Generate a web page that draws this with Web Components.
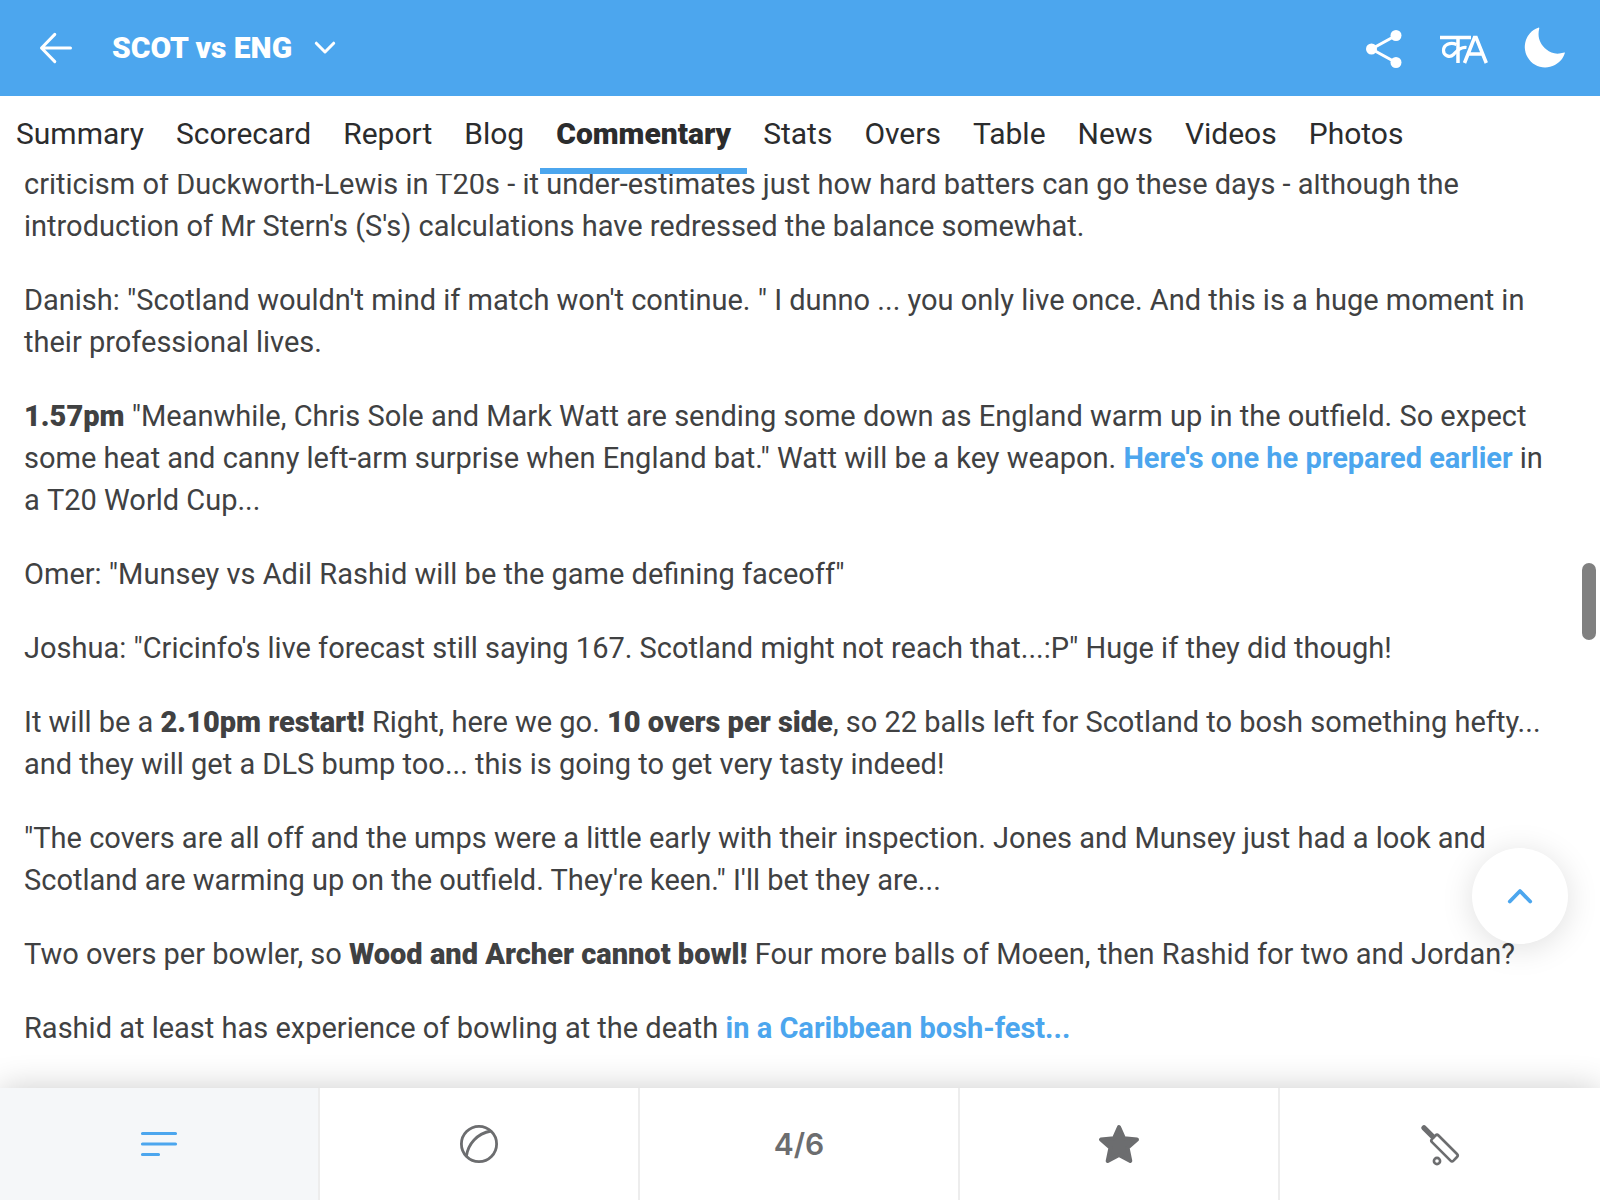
<!DOCTYPE html>
<html lang="en">
<head>
<meta charset="utf-8">
<meta name="viewport" content="width=device-width, initial-scale=1">
<title>SCOT vs ENG</title>
<style>
html, body { margin: 0; height: 100%; }
body { font-family: Roboto, "Liberation Sans", sans-serif; background: #fff; --accent: #4ca6ee; --ink: #2b2c2d; --text: #404142; --muted: #6c6d6f; }
commentary-note b { font-weight: 900; }
</style>
</head>
<body>
<match-app>
  <match-header slot="header">SCOT vs ENG</match-header>
  <match-tabs slot="tabs">
    <match-tab>Summary</match-tab>
    <match-tab>Scorecard</match-tab>
    <match-tab>Report</match-tab>
    <match-tab>Blog</match-tab>
    <match-tab active>Commentary</match-tab>
    <match-tab>Stats</match-tab>
    <match-tab>Overs</match-tab>
    <match-tab>Table</match-tab>
    <match-tab>News</match-tab>
    <match-tab>Videos</match-tab>
    <match-tab>Photos</match-tab>
  </match-tabs>
  <commentary-feed>
    <commentary-note>criticism of Duckworth-Lewis in T20s - it under-estimates just how hard batters can go these days - although the introduction of Mr Stern's (S's) calculations have redressed the balance somewhat.</commentary-note>
    <commentary-note>Danish: "Scotland wouldn't mind if match won't continue. " I dunno ... you only live once. And this is a huge moment in their professional lives.</commentary-note>
    <commentary-note><b>1.57pm</b> "Meanwhile, Chris Sole and Mark Watt are sending some down as England warm up in the outfield. So expect some heat and canny left-arm surprise when England bat." Watt will be a key weapon. <story-link>Here's one he prepared earlier</story-link> in a&nbsp;T20 World Cup...</commentary-note>
    <commentary-note>Omer: "Munsey vs Adil Rashid will be the game defining faceoff"</commentary-note>
    <commentary-note>Joshua: "Cricinfo's live forecast still saying 167. Scotland might not reach that...:P" Huge if they did though!</commentary-note>
    <commentary-note>It will be a <b>2.10pm restart!</b> Right, here we go. <b>10 overs per side</b>, so 22 balls left for Scotland to bosh something hefty... and they will get a DLS bump too... this is going to get very tasty indeed!</commentary-note>
    <commentary-note>"The covers are all off and the umps were a little early with their inspection. Jones and Munsey just had a look and Scotland are warming up on the outfield. They're keen." I'll bet they are...</commentary-note>
    <commentary-note>Two overs per bowler, so <b>Wood and Archer cannot bowl!</b> Four more balls of Moeen, then Rashid for two and Jordan?</commentary-note>
    <commentary-note>Rashid at least has experience of bowling at the death <story-link>in a Caribbean bosh-fest...</story-link></commentary-note>
  </commentary-feed>
  <filter-bar slot="filters">
    <filter-item active label="All commentary">
      <svg width="44" height="44" viewBox="0 0 44 44" fill="none" stroke="currentColor" stroke-width="3.200" stroke-linecap="round"><path d="M5.500 11.500h33M5.500 22h33M5.500 32.500h16"/></svg>
    </filter-item>
    <filter-item label="Full commentary">
      <svg width="44" height="44" viewBox="0 0 44 44" fill="none" stroke="currentColor" stroke-width="2.800"><circle cx="22" cy="22" r="17.600"/><path d="M9.300 34.500C11 22 20 11.500 34 9"/></svg>
    </filter-item>
    <filter-item label="Boundaries">4/6</filter-item>
    <filter-item label="Highlights">
      <svg width="44" height="44" viewBox="0 0 44 44" fill="currentColor" stroke="currentColor" stroke-width="4" stroke-linejoin="round"><path d="M22 5l5 11.300L40 17.500 30.600 25.800 33.300 39 22 33 10.700 39l2.700-13.200L4 17.500l13-1.200z"/></svg>
    </filter-item>
    <filter-item label="Batting">
      <svg width="44" height="44" viewBox="0 0 44 44" fill="none" stroke="currentColor" stroke-width="2.600"><path d="M6 5.800l8.500 8.500" stroke-width="5.300" stroke-linecap="round"/><path d="M17.500 13.500Q19 12 20.500 13.500L39 32Q40.500 33.500 39 35L35.500 38.700Q34 40.200 32.500 38.700L14 20.200Q12.500 18.700 14 17.200z"/><circle cx="19" cy="39" r="3.100"/></svg>
    </filter-item>
  </filter-bar>
</match-app>

<script>
const define = (name, markup, setup) => {
  const template = document.createElement('template');
  template.innerHTML = markup;
  customElements.define(name, class extends HTMLElement {
    constructor() {
      super();
      this.attachShadow({ mode: 'open' }).append(template.content.cloneNode(true));
    }
    connectedCallback() { if (setup) setup(this, this.shadowRoot); }
  });
};

define('match-app', `
<style>
:host { display: flex; flex-direction: column; height: 100vh; overflow: hidden; }
main { position: relative; flex: 1; min-height: 0; display: flex; flex-direction: column; }
scroll-thumb { position: absolute; right: 4px; top: 389px; }
to-top { position: absolute; right: 32px; bottom: 144px; }
</style>
<slot name="header"></slot>
<slot name="tabs"></slot>
<main><slot></slot><scroll-thumb></scroll-thumb><to-top></to-top></main>
<slot name="filters"></slot>`);

define('match-header', `
<style>
:host { display: block; flex: none; }
header { display: flex; align-items: center; height: 96px; padding: 0 32px; background: var(--accent); color: #fff; box-sizing: border-box; }
button { display: flex; align-items: center; padding: 0; border: 0; background: none; color: inherit; font: inherit; }
h1 { margin: 0; font-size: 30px; line-height: 40px; font-weight: 900; }
.title { gap: 20px; margin-left: 32px; }
.tools { display: flex; gap: 32px; margin-left: auto; }
svg { display: block; }
</style>
<header>
  <button aria-label="Back"><svg width="48" height="48" viewBox="0 0 48 48" fill="none" stroke="#fff" stroke-width="3" stroke-linecap="round" stroke-linejoin="round"><path d="M38.500 24H9.500M22.800 10.400 9.500 24l13.300 13.600"/></svg></button>
  <button class="title"><h1><slot></slot></h1><svg width="26" height="26" viewBox="0 0 26 26" fill="none" stroke="#fff" stroke-width="3" stroke-linecap="round" stroke-linejoin="round"><path d="M4.300 8.200 13 17l8.700-8.800"/></svg></button>
  <div class="tools">
    <button aria-label="Share"><svg width="48" height="48" viewBox="0 0 48 48" fill="#fff"><path d="M36 11.500 11.500 25 36 38.500" fill="none" stroke="#fff" stroke-width="3"/><circle cx="36" cy="11.500" r="5.500"/><circle cx="11.500" cy="25" r="5.500"/><circle cx="36" cy="38.500" r="5.500"/></svg></button>
    <button aria-label="Language"><svg width="48" height="48" viewBox="0 0 48 48" fill="none" stroke="#fff" stroke-width="3.500"><path d="M0 13.500h31M18 13.500V39"/><path d="M16.500 20.500C10 17.500 3.500 21 3.500 26.500c0 5.500 6.500 7.500 10 4C16.500 27.500 20 22.500 26.500 23.500" stroke-width="3.200"/><path d="M24.500 39 34.500 13.500h1.600L46.300 39M27.800 30h14.500"/></svg></button>
    <button aria-label="Dark mode"><svg width="48" height="48" viewBox="0 0 48 48" fill="#fff"><path d="M18.200 3.700A20.500 20.500 0 1 0 44.700 29.500Q45.400 28.300 44.300 28.500C37 30.800 31 29.500 26.500 25.500 20 20 17 13 19.300 4.200Q19.300 3.200 18.200 3.700z"/></svg></button>
  </div>
</header>`);

define('match-tabs', `
<style>
:host { display: block; flex: none; background: #fff; }
nav { display: flex; height: 78px; }
</style>
<nav aria-label="Match sections"><slot></slot></nav>`);

define('match-tab', `
<style>
:host { display: flex; flex: none; }
a { display: flex; align-items: center; box-sizing: border-box; padding: 4px 16px 0; border-bottom: 6px solid transparent; color: var(--ink); font-size: 30px; line-height: 40px; text-decoration: none; white-space: nowrap; }
:host([active]) a { font-weight: 900; border-color: var(--accent); }
</style>
<a href="#"><slot></slot></a>`, (el, root) => {
  if (el.hasAttribute('active')) root.querySelector('a').setAttribute('aria-current', 'page');
});

define('commentary-feed', `
<style>
:host { display: flex; flex: 1; min-height: 0; overflow: hidden; }
article { flex: 1; display: flex; flex-direction: column; justify-content: flex-end; gap: 32px; padding: 0 24px 39px; }
</style>
<article><slot></slot></article>`);

define('commentary-note', `
<style>
:host { display: block; flex: none; color: var(--text); font-size: 29px; line-height: 42px; }
p { margin: 0; }
</style>
<p><slot></slot></p>`);

define('story-link', `
<style>
:host { display: inline; }
a { color: var(--accent); font-weight: 700; text-decoration: none; }
</style>
<a href="#"><slot></slot></a>`);

define('scroll-thumb', `
<style>
:host { display: block; width: 14px; height: 77px; border-radius: 7px; background: #808080; }
</style>`);

define('to-top', `
<style>
:host { display: block; }
button { display: grid; place-items: center; width: 96px; height: 96px; padding: 0; border: 0; border-radius: 50%; background: #fff; box-shadow: 0 4px 32px rgba(0,0,0,.13); color: var(--accent); }
</style>
<button aria-label="Back to top"><svg width="32" height="32" viewBox="0 0 32 32" fill="none" stroke="currentColor" stroke-width="3.800" stroke-linecap="round" stroke-linejoin="round"><path d="M5.800 21.500 16 11l10.200 10.500"/></svg></button>`);

define('filter-bar', `
<style>
:host { display: block; flex: none; position: relative; box-shadow: 0 0 32px rgba(0,0,0,.2); background: #fff; }
nav { display: flex; height: 112px; }
</style>
<nav aria-label="Commentary filters"><slot></slot></nav>`);

define('filter-item', `
<style>
:host { display: flex; flex: 1; }
button { flex: 1; display: flex; align-items: center; justify-content: center; padding: 0; border: 0; border-right: 2px solid #ededed; background: #fff; color: var(--muted); font: 600 30px/40px Inter, sans-serif; }
:host([active]) button { background: #f5f7f9; color: var(--accent); }
:host(:last-child) button { border-right: 0; }
</style>
<button><slot></slot></button>`, (el, root) => {
  root.querySelector('button').title = el.getAttribute('label');
});
</script>
</body>
</html>
